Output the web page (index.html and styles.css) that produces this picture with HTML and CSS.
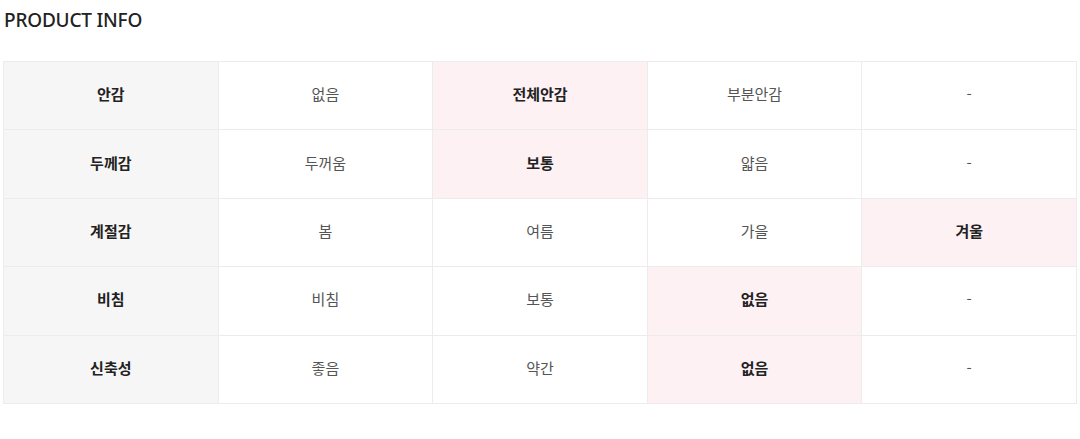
FILE: index.html
```html
<!DOCTYPE html>
<html lang="ko">
<head>
<meta charset="utf-8">
<link rel="stylesheet" href="styles.css">
</head>
<body>
<div class="wrap">
  <h2 class="title">PRODUCT INFO</h2>
  <table class="info">
    <tr>
      <th>안감</th><td>없음</td><td class="on">전체안감</td><td>부분안감</td><td>-</td>
    </tr>
    <tr>
      <th>두께감</th><td>두꺼움</td><td class="on">보통</td><td>얇음</td><td>-</td>
    </tr>
    <tr>
      <th>계절감</th><td>봄</td><td>여름</td><td>가을</td><td class="on">겨울</td>
    </tr>
    <tr>
      <th>비침</th><td>비침</td><td>보통</td><td class="on">없음</td><td>-</td>
    </tr>
    <tr>
      <th>신축성</th><td>좋음</td><td>약간</td><td class="on">없음</td><td>-</td>
    </tr>
  </table>
</div>
</body>
</html>
```
FILE: styles.css
```css
html, body {
  margin: 0;
  padding: 0;
  background: #fff;
}
.wrap {
  padding: 0 3px;
  font-family: "Noto Sans", "Noto Sans CJK KR", sans-serif;
}
.title {
  margin: 0;
  padding-left: 1px;
  height: 61px;
  line-height: 41px;
  font-size: 19px;
  font-weight: 500;
  color: #222;
  letter-spacing: -0.2px;
}
.info {
  width: 1074px;
  border-collapse: collapse;
  table-layout: fixed;
  font-family: "Noto Sans CJK KR", sans-serif;
  font-size: 15px;
}
.info tr {
  height: 68.4px;
}
.info th, .info td {
  border: 1px solid #ececec;
  text-align: center;
  vertical-align: middle;
  padding: 0 0 4px;
}
.info th {
  background: #f6f6f6;
  color: #222;
  font-weight: 700;
}
.info td {
  color: #555;
  font-weight: 400;
}
.info td.on {
  background: #fdf1f4;
  color: #222;
  font-weight: 700;
}
```
